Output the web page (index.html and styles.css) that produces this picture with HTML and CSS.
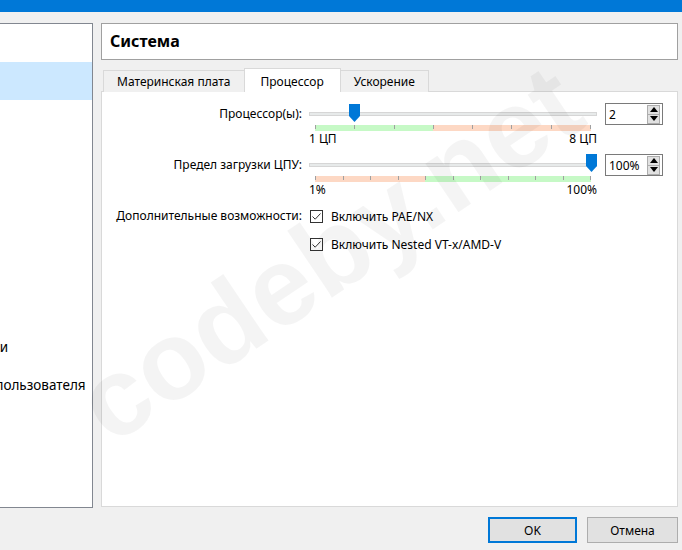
FILE: index.html
```html
<!DOCTYPE html>
<html lang="ru">
<head>
    <meta charset="UTF-8">
    <title>Система - Настройки</title>
    <link rel="stylesheet" href="styles.css">
</head>
<body>
    <div class="titlebar"></div>

    <div class="main">
        <div class="nav">
            <ul>
                <li>Общие</li>
                <li class="selected">Система</li>
                <li>Дисплей</li>
                <li>Носители</li>
                <li>Аудио</li>
                <li>Сеть</li>
                <li>COM-порты</li>
                <li>USB</li>
                <li>Общие папки</li>
                <li>Интерфейс пользователя</li>
            </ul>
        </div>

        <div class="content">
            <div class="page-title">Система</div>

            <div class="tabs">
                <div class="tab">Материнская плата</div>
                <div class="tab active">Процессор</div>
                <div class="tab">Ускорение</div>
            </div>

            <div class="pane">
                <div class="form">
                    <div class="label">Процессор(ы):</div>
                    <div class="slider">
                        <div class="track-area">
                            <div class="track"></div>
                            <svg class="thumb thumb-cpu" width="11" height="18" viewBox="0 0 11 18"><path d="M0 0H11V12L5.5 18L0 12Z" fill="#0078d7"/></svg>
                        </div>
                        <div class="scale scale-cpu">
                            <span></span><span></span><span></span><span></span>
                            <span></span><span></span><span></span><span></span>
                        </div>
                        <div class="scale-labels"><span>1 ЦП</span><span>8 ЦП</span></div>
                    </div>
                    <div class="spin">
                        <span class="spin-value">2</span>
                        <div class="spin-buttons">
                            <div class="spin-btn"><svg width="8" height="5" viewBox="0 0 8 5"><path d="M4 0L8 5H0Z" fill="#000"/></svg></div>
                            <div class="spin-btn"><svg width="8" height="5" viewBox="0 0 8 5"><path d="M0 0H8L4 5Z" fill="#000"/></svg></div>
                        </div>
                    </div>

                    <div class="label">Предел загрузки ЦПУ:</div>
                    <div class="slider">
                        <div class="track-area">
                            <div class="track"></div>
                            <svg class="thumb thumb-cap" width="11" height="18" viewBox="0 0 11 18"><path d="M0 0H11V12L5.5 18L0 12Z" fill="#0078d7"/></svg>
                        </div>
                        <div class="scale scale-cap">
                            <span></span><span></span><span></span><span></span>
                            <span></span><span></span><span></span><span></span>
                            <span></span><span></span><span></span>
                        </div>
                        <div class="scale-labels"><span>1%</span><span>100%</span></div>
                    </div>
                    <div class="spin">
                        <span class="spin-value">100%</span>
                        <div class="spin-buttons">
                            <div class="spin-btn"><svg width="8" height="5" viewBox="0 0 8 5"><path d="M4 0L8 5H0Z" fill="#000"/></svg></div>
                            <div class="spin-btn"><svg width="8" height="5" viewBox="0 0 8 5"><path d="M0 0H8L4 5Z" fill="#000"/></svg></div>
                        </div>
                    </div>

                    <div class="label">Дополнительные возможности:</div>
                    <div class="checks">
                        <div class="check">
                            <span class="box"><svg width="11" height="11" viewBox="0 0 11 11"><path d="M1.5 5.5L4.2 8.2L9.5 2.5" fill="none" stroke="#333" stroke-width="1"/></svg></span>
                            Включить PAE/NX
                        </div>
                        <div class="check">
                            <span class="box"><svg width="11" height="11" viewBox="0 0 11 11"><path d="M1.5 5.5L4.2 8.2L9.5 2.5" fill="none" stroke="#333" stroke-width="1"/></svg></span>
                            Включить Nested VT-x/AMD-V
                        </div>
                    </div>
                </div>
            </div>
        </div>
    </div>

    <div class="footer">
        <button class="btn default">OK</button>
        <button class="btn">Отмена</button>
    </div>

    <div class="watermark">codeby.net</div>
</body>
</html>
```

FILE: styles.css
```css
body {
    margin: 0;
    background: #f0f0f0;
    font-family: "Noto Sans", "Liberation Sans", Arial, sans-serif;
    font-size: 12px;
    color: #000;
    overflow: hidden;
    height: 550px;
}

.titlebar {
    height: 12px;
    background: #0078d7;
}

.main {
    display: flex;
    margin-top: 11px;
}

.nav {
    width: 92px;
    height: 483px;
    background: white;
    border: 1px solid #828790;
    border-left: none;
    overflow: hidden;
}

.nav ul {
    list-style: none;
    margin: 0 0 0 -81px;
    padding: 0;
    width: 200px;
    font-size: 13.5px;
}

.nav li {
    height: 38px;
    line-height: 38px;
    white-space: nowrap;
}

.nav li.selected {
    background: #cce8ff;
}

.content {
    margin-left: 8px;
    width: 577px;
}

.page-title {
    height: 35px;
    line-height: 35px;
    background: white;
    border: 1px solid #a0a0a0;
    padding-left: 8px;
    font-weight: bold;
    font-size: 16px;
}

.tabs {
    display: flex;
    margin-top: 9px;
    padding-left: 2px;
    height: 23px;
    align-items: flex-end;
}

.tab {
    height: 21px;
    line-height: 21px;
    padding: 0 13px;
    background: #f0f0f0;
    border: 1px solid #d9d9d9;
    border-bottom: none;
}

.tab + .tab {
    margin-left: -1px;
}

.tab.active {
    height: 23px;
    line-height: 25px;
    background: white;
    padding: 0 16px;
    position: relative;
    z-index: 1;
}

.pane {
    height: 414px;
    background: white;
    border: 1px solid #d9d9d9;
    margin-top: -1px;
}

.form {
    display: grid;
    grid-template-columns: 200px 303px 58px;
    padding-top: 11px;
    row-gap: 9px;
}

.label {
    text-align: right;
    line-height: 22px;
    white-space: nowrap;
}

.slider {
    padding: 0 8px 0 7px;
}

.track-area {
    height: 22px;
    position: relative;
    display: flex;
    align-items: center;
}

.track {
    width: 100%;
    height: 2px;
    background: #e7eaea;
    border: 1px solid #d6d6d6;
}

.thumb {
    position: absolute;
    top: 1px;
}

.thumb-cpu {
    left: 40px;
}

.thumb-cap {
    right: 0;
    top: 0;
}

.scale {
    display: flex;
    justify-content: space-between;
    height: 6px;
    margin: 0 6px;
}

.scale span {
    width: 1px;
    height: 4px;
    background: #a0a0a0;
}

.scale-cpu {
    background: linear-gradient(to right, #c6f9c6 118px, #fdd8c4 118px);
}

.scale-cap {
    background: linear-gradient(to right, #fdd8c4 110px, #c6f9c6 110px);
}

.scale-labels {
    display: flex;
    justify-content: space-between;
    height: 14px;
    line-height: 16px;
}

.spin {
    height: 20px;
    border: 1px solid #7a7a7a;
    background: white;
    display: flex;
    align-items: center;
    justify-content: space-between;
    padding-left: 3px;
}

.spin-buttons {
    display: flex;
    flex-direction: column;
    margin-right: 2px;
}

.spin-btn {
    width: 11px;
    height: 8px;
    background: #e1e1e1;
    border: 1px solid #adadad;
    display: flex;
    align-items: center;
    justify-content: center;
}

.spin-btn + .spin-btn {
    margin-top: -1px;
}

.checks {
    grid-column: 2 / 4;
    display: flex;
    flex-direction: column;
    gap: 6px;
    padding-left: 8px;
}

.check {
    height: 22px;
    display: flex;
    align-items: center;
    gap: 8px;
}

.box {
    width: 13px;
    height: 13px;
    box-sizing: border-box;
    border: 1px solid #333;
    background: white;
    display: flex;
    align-items: center;
    justify-content: center;
}

.footer {
    display: flex;
    justify-content: flex-end;
    gap: 10px;
    padding: 9px 4px 0 0;
}

.btn {
    width: 91px;
    height: 26px;
    background: #e1e1e1;
    border: 1px solid #adadad;
    font-family: inherit;
    font-size: 12px;
    color: #000;
    padding: 0;
}

.btn.default {
    width: 89px;
    border: 2px solid #0078d7;
}

.watermark {
    position: absolute;
    left: 54px;
    top: 362px;
    font-family: "Liberation Sans", Arial, sans-serif;
    font-size: 111px;
    font-weight: bold;
    color: rgba(0, 0, 0, 0.045);
    transform: rotate(-34deg);
    transform-origin: left top;
    white-space: nowrap;
    pointer-events: none;
}
```
